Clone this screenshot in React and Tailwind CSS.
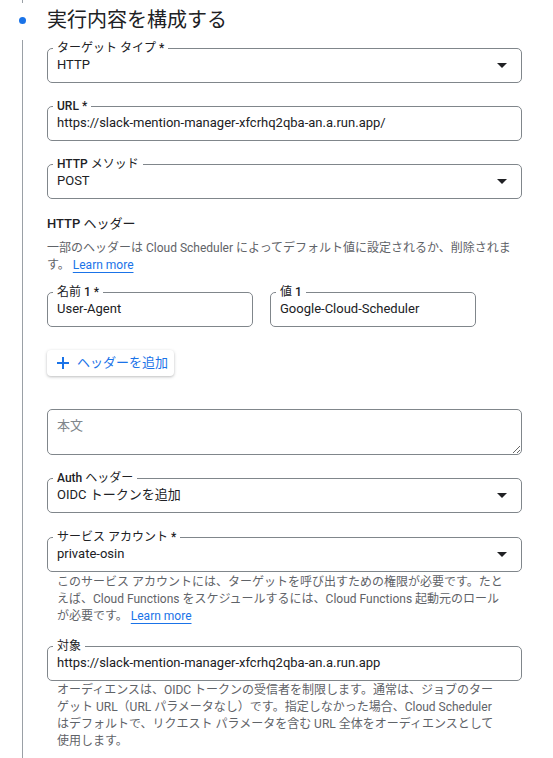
import React from "react";

function Arrow() {
  return (
    <svg width="10" height="5" viewBox="0 0 10 5" className="mr-[9px] shrink-0">
      <polygon points="0,0 10,0 5,5" fill="#202124" />
    </svg>
  );
}

function Label({ text }) {
  const parts = text.split(/([A-Za-z0-9*]+)/);
  return (
    <>
      {parts.map((p, i) =>
        /^[A-Za-z0-9*]+$/.test(p) ? (
          <span key={i} className="font-medium">{p}</span>
        ) : (
          <span key={i} className="font-normal">{p}</span>
        )
      )}
    </>
  );
}

function Field({ label, value, select, className = "" }) {
  return (
    <fieldset className={`min-w-0 border border-[#80868b] rounded-[5px] px-[5px] pb-[6px] ${className}`}>
      <legend className="px-[4px] text-[12px] leading-[12px] text-[#202124]">
        <Label text={label} />
      </legend>
      <div className="h-[22px] flex items-center justify-between pl-[4px] text-[13px] text-[#202124]">
        <span className="whitespace-nowrap">{value}</span>
        {select && <Arrow />}
      </div>
    </fieldset>
  );
}

function Link() {
  return <span className="text-[#1a73e8] underline underline-offset-[3px] decoration-[#1a73e8]">Learn more</span>;
}

export default function App() {
  return (
    <div className="w-[553px] h-[758px] bg-white overflow-hidden flex font-[Roboto,'Noto_Sans_CJK_JP',sans-serif] text-[#202124]">
      <div className="w-[45px] shrink-0 flex flex-col items-center">
        <div className="w-px h-[3px] bg-[#9aa0a6]" />
        <div className="mt-[14px] w-[7px] h-[7px] rounded-full bg-[#1a73e8]" />
        <div className="mt-[16px] w-px flex-1 bg-[#9aa0a6]" />
      </div>
      <div className="w-[475px] ml-[2px] pt-[6px] flex flex-col">
        <div className="text-[20px] leading-[28px]">実行内容を構成する</div>
        <Field className="mt-[8px]" label="ターゲット タイプ *" value="HTTP" select />
        <Field className="mt-[17px]" label="URL *" value="https://slack-mention-manager-xfcrhq2qba-an.a.run.app/" />
        <Field className="mt-[17px]" label="HTTP メソッド" value="POST" select />
        <div className="mt-[15px] text-[13px] leading-[20px]">
          <span className="font-medium">HTTP</span> ヘッダー
        </div>
        <div className="mt-[6px] text-[12px] leading-[17px] text-[#5f6368]">
          一部のヘッダーは Cloud Scheduler によってデフォルト値に設定されるか、削除されま
          <br />
          す。 <Link />
        </div>
        <div className="mt-[12px] flex gap-[17px]">
          <Field className="w-[206px]" label="名前 1 *" value="User-Agent" />
          <Field className="w-[206px]" label="値 1" value="Google-Cloud-Scheduler" />
        </div>
        <div className="mt-[23px] flex">
          <button className="h-[26px] w-[127px] flex items-center pl-[10px] gap-[8px] rounded-[4px] bg-white shadow-[0_1px_3px_rgba(60,64,67,0.35)] text-[13px] text-[#1a73e8]">
            <svg width="12" height="12" viewBox="0 0 12 12">
              <path d="M6 0v12M0 6h12" stroke="#1a73e8" strokeWidth="2" />
            </svg>
            <span>ヘッダーを追加</span>
          </button>
        </div>
        <textarea
          className="mt-[33px] h-[46px] w-full border border-[#80868b] rounded-[5px] px-[9px] py-[6px] text-[13px] leading-[20px] placeholder:text-[#80868b] outline-none"
          placeholder="本文"
        />
        <Field className="mt-[17px]" label="Auth ヘッダー" value="OIDC トークンを追加" select />
        <Field className="mt-[18px]" label="サービス アカウント *" value="private-osin" select />
        <div className="mt-[2px] pl-[10px] text-[12px] leading-[17px] text-[#5f6368]">
          このサービス アカウントには、ターゲットを呼び出すための権限が必要です。たと
          <br />
          えば、Cloud Functions をスケジュールするには、Cloud Functions 起動元のロール
          <br />
          が必要です。 <Link />
        </div>
        <Field className="mt-[15px]" label="対象" value="https://slack-mention-manager-xfcrhq2qba-an.a.run.app" />
        <div className="mt-[1px] pl-[10px] text-[12px] leading-[17px] text-[#5f6368]">
          オーディエンスは、OIDC トークンの受信者を制限します。通常は、ジョブのター
          <br />
          ゲット URL（URL パラメータなし）です。指定しなかった場合、Cloud Scheduler
          <br />
          はデフォルトで、リクエスト パラメータを含む URL 全体をオーディエンスとして
          <br />
          使用します。
        </div>
      </div>
    </div>
  );
}
